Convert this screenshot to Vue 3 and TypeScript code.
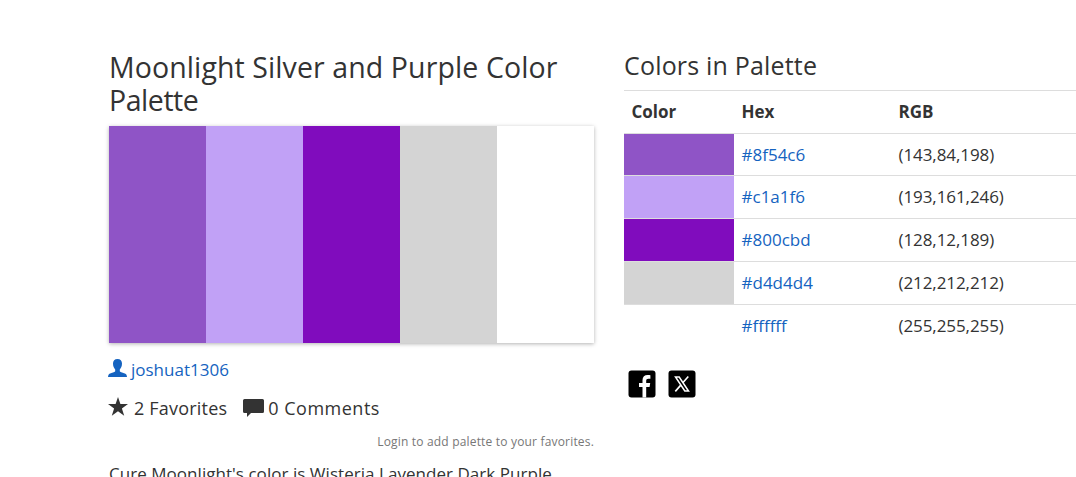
<script setup lang="ts">
interface Swatch {
  hex: string
  rgb: string
}

const swatches: Swatch[] = [
  { hex: '#8f54c6', rgb: '(143,84,198)' },
  { hex: '#c1a1f6', rgb: '(193,161,246)' },
  { hex: '#800cbd', rgb: '(128,12,189)' },
  { hex: '#d4d4d4', rgb: '(212,212,212)' },
  { hex: '#ffffff', rgb: '(255,255,255)' },
]
</script>

<template>
  <main class="page">
    <section class="palette">
      <h1><span class="line-a">Moonlight Silver and Purple Color</span> <span class="line-b">Palette</span></h1>
      <div class="strip">
        <div v-for="s in swatches" :key="s.hex" class="band" :style="{ backgroundColor: s.hex }"></div>
      </div>
      <a class="author">
        <svg width="19" height="18" viewBox="0 0 19 18">
          <path d="M9.500 0C6.600 0 5 1.800 5 4.600c0 2.700 1 4.700 2.200 5.900v1.700C6.700 13.400 1.500 14 .7 15.500.2 16.300.1 17.300 0 18h19c-.1-.7-.2-1.700-.7-2.500-.8-1.500-6-2.100-6.500-3.300v-1.700C13 9.300 14 7.300 14 4.600 14 1.800 12.400 0 9.500 0z" fill="currentColor" />
        </svg>
        <span class="author-name">joshuat1306</span>
      </a>
      <div class="stats">
        <svg class="star" width="20" height="19" viewBox="0 0 20 19">
          <path d="M10 0l2.400 7H20l-6.100 4.400 2.300 7.300-6.200-4.500-6.200 4.500 2.300-7.300L0 7h7.600z" fill="currentColor" />
        </svg>
        <span class="favorites">2 Favorites</span>
        <svg class="bubble" width="21" height="18" viewBox="0 0 21 18">
          <path d="M1.500 0h18A1.500 1.500 0 0 1 21 1.500v11a1.500 1.500 0 0 1-1.500 1.500H8l-4 4v-4H1.500A1.500 1.500 0 0 1 0 12.500v-11A1.500 1.500 0 0 1 1.500 0z" fill="currentColor" />
        </svg>
        <span class="comments">0 Comments</span>
      </div>
      <p class="login">Login to add palette to your favorites.</p>
      <p class="description">Cure Moonlight's color is Wisteria Lavender Dark Purple</p>
    </section>

    <section class="details">
      <h2>Colors in Palette</h2>
      <table>
        <thead>
          <tr><th class="c-color">Color</th><th class="c-hex">Hex</th><th>RGB</th></tr>
        </thead>
        <tbody>
          <tr v-for="s in swatches" :key="s.hex">
            <td :style="{ backgroundColor: s.hex }"></td>
            <td><a class="hex">{{ s.hex }}</a></td>
            <td class="rgb">{{ s.rgb }}</td>
          </tr>
        </tbody>
      </table>
      <div class="share">
        <svg width="28" height="28" viewBox="0 0 28 28">
          <rect x=".5" y=".5" width="27" height="27" rx="3" fill="#000" />
          <path d="M14.500 27.500V17H11v-4h3.500v-2.700c0-3.500 2-5.200 5.200-5.200 1.200 0 2.100.1 2.700.2v3.400h-2c-1.600 0-2.200.8-2.200 2V13h4l-.6 4h-3.400v10.500z" fill="#fff" />
        </svg>
        <svg width="28" height="28" viewBox="0 0 28 28">
          <rect x=".5" y=".5" width="27" height="27" rx="3" fill="#000" />
          <path d="M7.500 7h3.700l9.300 14h-3.700z" fill="none" stroke="#fff" stroke-width="1.500" />
          <path d="M20.300 6.500l-5.500 6.300M12.800 15.100l-5.500 6.300" fill="none" stroke="#fff" stroke-width="1.600" />
        </svg>
      </div>
    </section>
  </main>
</template>

<style>
body {
  background: #fff;
  overflow: hidden;
}
</style>

<style scoped>
.page {
  box-sizing: border-box;
  display: flex;
  gap: 30px;
  height: 477px;
  padding: 50px 0 0 109px;
  overflow: hidden;
  font-family: "Open Sans", "Noto Sans", sans-serif;
  font-size: 17px;
  color: #333;
}
.palette {
  flex: 0 0 485px;
  padding-top: 1px;
}
h1 {
  margin: 0;
  font-size: 28.500px;
  font-weight: 400;
  line-height: 33px;
}
h1 span {
  display: block;
  white-space: nowrap;
}
.line-a {
  letter-spacing: 0.1px;
}
.line-b {
  letter-spacing: -0.45px;
}
.strip {
  display: flex;
  height: 217px;
  margin-top: 9px;
  box-shadow: 0 1px 4px rgba(0, 0, 0, 0.3);
}
.band {
  flex: 1;
}
.author {
  display: flex;
  align-items: center;
  height: 26px;
  margin-top: 13px;
  color: #1563c0;
}
.author svg {
  margin: -3px 4px 0 -1px;
}
.stats {
  display: flex;
  align-items: center;
  height: 26px;
  margin-top: 13px;
  font-size: 18px;
}
.star {
  margin: -4px 6px 0 -1px;
}
.favorites {
  letter-spacing: 0.2px;
}
.bubble {
  margin: -1px 4px 0 16px;
}
.comments {
  letter-spacing: 0.5px;
}
.login {
  margin: 12px 0 0;
  font-size: 12px;
  line-height: 18px;
  letter-spacing: 0.18px;
  text-align: right;
  color: #777;
}
.description {
  margin: 10px 0 0;
  line-height: 26px;
  letter-spacing: 0.04px;
  white-space: nowrap;
}
.details {
  flex: 0 0 452px;
}
h2 {
  margin: 0 0 10px;
  font-size: 25px;
  font-weight: 400;
  line-height: 30px;
  letter-spacing: 0.18px;
}
table {
  width: 452px;
  border-collapse: separate;
  border-spacing: 0;
  table-layout: fixed;
}
th,
td {
  box-sizing: border-box;
  height: 43px;
  padding: 0 7.500px;
  border-top: 1px solid #ddd;
  line-height: 24px;
  text-align: left;
}
tbody tr:first-child td {
  height: 42px;
}
.c-color {
  width: 110px;
}
.c-hex {
  width: 157px;
}
.hex {
  color: #1563c0;
}
.rgb {
  letter-spacing: -0.08px;
}
.share {
  display: flex;
  gap: 12px;
  margin: 23px 0 0 4px;
}
</style>
